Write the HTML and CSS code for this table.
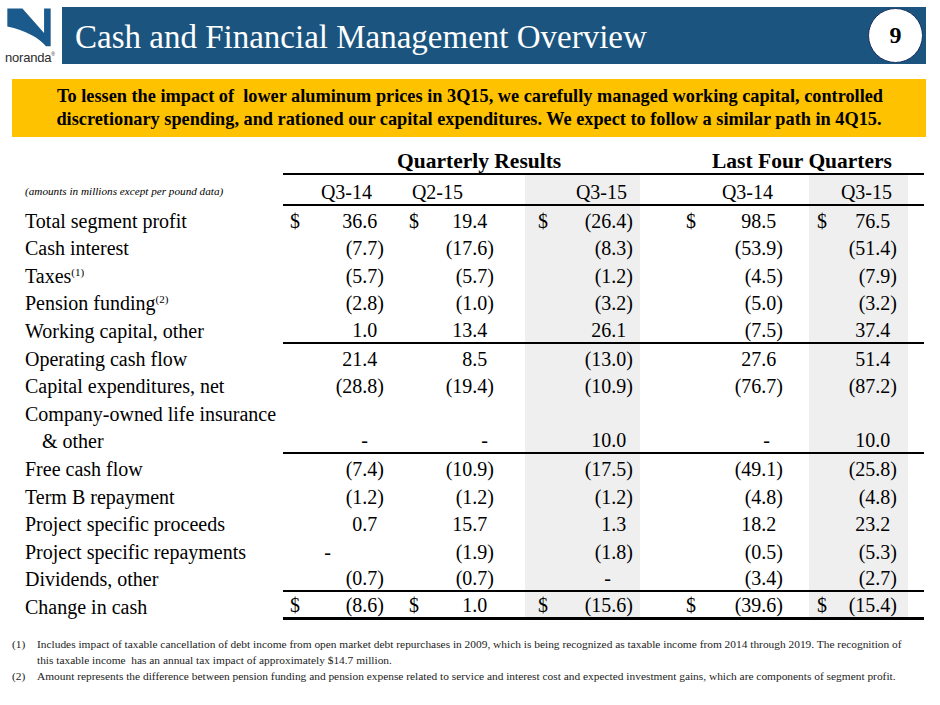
FILE: index.html
```html
<!DOCTYPE html>
<html>
<head>
<meta charset="utf-8">
<title>Cash and Financial Management Overview</title>
<link rel="stylesheet" href="styles.css">
</head>
<body>
<header class="top">
  <div class="logo">
    <svg width="58" height="52" viewBox="0 0 58 52" aria-hidden="true">
      <path d="M6 9 L22 9 L45 35 L45 9 L52 9 L52 49 L47 49 C40 40 25 32 6 28 Z" fill="#1b5a8c"/>
    </svg>
    <span class="brand">noranda<sup>®</sup></span>
  </div>
  <div class="titlebar">
    <h1>Cash and Financial Management Overview</h1>
    <div class="badge">9</div>
  </div>
</header>

<div class="banner">
  <p class="l1">To lessen the impact of&nbsp; lower aluminum prices in 3Q15, we carefully managed working capital, controlled</p>
  <p>discretionary spending, and rationed our capital expenditures. We expect to follow a similar path in 4Q15.</p>
</div>

<table class="cf">
  <colgroup>
    <col class="w-label"><col class="w-c1"><col class="w-c2"><col class="w-c3"><col class="w-c4"><col class="w-c5"><col class="w-pad">
  </colgroup>
  <thead>
    <tr class="grp">
      <th></th>
      <th colspan="3" class="g1">Quarterly Results</th>
      <th colspan="3" class="g2">Last Four Quarters</th>
    </tr>
    <tr class="per">
      <th class="note">(amounts in millions except per pound data)</th>
      <th class="q c1">Q3-14</th>
      <th class="q c2">Q2-15</th>
      <th class="q c3 sh">Q3-15</th>
      <th class="q c4">Q3-14</th>
      <th class="q c5 sh">Q3-15</th>
      <th class="pad"></th>
    </tr>
  </thead>
  <tbody>
    <tr>
      <td class="lbl">Total segment profit</td>
      <td class="v c1"><span class="d">$</span>36.6<span class="h">)</span></td>
      <td class="v c2"><span class="d">$</span>19.4<span class="h">)</span></td>
      <td class="v c3 sh"><span class="d">$</span>(26.4)</td>
      <td class="v c4"><span class="d">$</span>98.5<span class="h">)</span></td>
      <td class="v c5 sh"><span class="d">$</span>76.5<span class="h">)</span></td>
      <td class="pad"></td>
    </tr>
    <tr>
      <td class="lbl">Cash interest</td>
      <td class="v c1">(7.7)</td>
      <td class="v c2">(17.6)</td>
      <td class="v c3 sh">(8.3)</td>
      <td class="v c4">(53.9)</td>
      <td class="v c5 sh">(51.4)</td>
      <td class="pad"></td>
    </tr>
    <tr>
      <td class="lbl">Taxes<sup>(1)</sup></td>
      <td class="v c1">(5.7)</td>
      <td class="v c2">(5.7)</td>
      <td class="v c3 sh">(1.2)</td>
      <td class="v c4">(4.5)</td>
      <td class="v c5 sh">(7.9)</td>
      <td class="pad"></td>
    </tr>
    <tr>
      <td class="lbl">Pension funding<sup>(2)</sup></td>
      <td class="v c1">(2.8)</td>
      <td class="v c2">(1.0)</td>
      <td class="v c3 sh">(3.2)</td>
      <td class="v c4">(5.0)</td>
      <td class="v c5 sh">(3.2)</td>
      <td class="pad"></td>
    </tr>
    <tr class="rule">
      <td class="lbl">Working capital, other</td>
      <td class="v c1">1.0<span class="h">)</span></td>
      <td class="v c2">13.4<span class="h">)</span></td>
      <td class="v c3 sh">26.1<span class="h">)</span></td>
      <td class="v c4">(7.5)</td>
      <td class="v c5 sh">37.4<span class="h">)</span></td>
      <td class="pad"></td>
    </tr>
    <tr>
      <td class="lbl">Operating cash flow</td>
      <td class="v c1">21.4<span class="h">)</span></td>
      <td class="v c2">8.5<span class="h">)</span></td>
      <td class="v c3 sh">(13.0)</td>
      <td class="v c4">27.6<span class="h">)</span></td>
      <td class="v c5 sh">51.4<span class="h">)</span></td>
      <td class="pad"></td>
    </tr>
    <tr>
      <td class="lbl">Capital expenditures, net</td>
      <td class="v c1">(28.8)</td>
      <td class="v c2">(19.4)</td>
      <td class="v c3 sh">(10.9)</td>
      <td class="v c4">(76.7)</td>
      <td class="v c5 sh">(87.2)</td>
      <td class="pad"></td>
    </tr>
    <tr>
      <td class="lbl">Company-owned life insurance</td>
      <td class="v c1"></td>
      <td class="v c2"></td>
      <td class="v c3 sh"></td>
      <td class="v c4"></td>
      <td class="v c5 sh"></td>
      <td class="pad"></td>
    </tr>
    <tr class="rule">
      <td class="lbl indent">&amp; other</td>
      <td class="v c1 zero-a">-</td>
      <td class="v c2 zero-b">-</td>
      <td class="v c3 sh">10.0<span class="h">)</span></td>
      <td class="v c4 zero-c">-</td>
      <td class="v c5 sh">10.0<span class="h">)</span></td>
      <td class="pad"></td>
    </tr>
    <tr>
      <td class="lbl">Free cash flow</td>
      <td class="v c1">(7.4)</td>
      <td class="v c2">(10.9)</td>
      <td class="v c3 sh">(17.5)</td>
      <td class="v c4">(49.1)</td>
      <td class="v c5 sh">(25.8)</td>
      <td class="pad"></td>
    </tr>
    <tr>
      <td class="lbl">Term B repayment</td>
      <td class="v c1">(1.2)</td>
      <td class="v c2">(1.2)</td>
      <td class="v c3 sh">(1.2)</td>
      <td class="v c4">(4.8)</td>
      <td class="v c5 sh">(4.8)</td>
      <td class="pad"></td>
    </tr>
    <tr>
      <td class="lbl">Project specific proceeds</td>
      <td class="v c1">0.7<span class="h">)</span></td>
      <td class="v c2">15.7<span class="h">)</span></td>
      <td class="v c3 sh">1.3<span class="h">)</span></td>
      <td class="v c4">18.2<span class="h">)</span></td>
      <td class="v c5 sh">23.2<span class="h">)</span></td>
      <td class="pad"></td>
    </tr>
    <tr>
      <td class="lbl">Project specific repayments</td>
      <td class="v c1 zero-d">-</td>
      <td class="v c2">(1.9)</td>
      <td class="v c3 sh">(1.8)</td>
      <td class="v c4">(0.5)</td>
      <td class="v c5 sh">(5.3)</td>
      <td class="pad"></td>
    </tr>
    <tr class="rule">
      <td class="lbl">Dividends, other</td>
      <td class="v c1">(0.7)</td>
      <td class="v c2">(0.7)</td>
      <td class="v c3 sh zero-e">-</td>
      <td class="v c4">(3.4)</td>
      <td class="v c5 sh">(2.7)</td>
      <td class="pad"></td>
    </tr>
    <tr class="total">
      <td class="lbl">Change in cash</td>
      <td class="v c1"><span class="d">$</span>(8.6)</td>
      <td class="v c2"><span class="d">$</span>1.0<span class="h">)</span></td>
      <td class="v c3 sh"><span class="d">$</span>(15.6)</td>
      <td class="v c4"><span class="d">$</span>(39.6)</td>
      <td class="v c5 sh"><span class="d">$</span>(15.4)</td>
      <td class="pad"></td>
    </tr>
  </tbody>
</table>

<div class="notes">
  <div class="fn">
    <span class="num">(1)</span>
    <span>Includes impact of taxable cancellation of debt income from open market debt repurchases in 2009, which is being recognized as taxable income from 2014 through 2019. The recognition of<br>this taxable income&nbsp; has an annual tax impact of approximately $14.7 million.</span>
  </div>
  <div class="fn">
    <span class="num">(2)</span>
    <span>Amount represents the difference between pension funding and pension expense related to service and interest cost and expected investment gains, which are components of segment profit.</span>
  </div>
</div>
</body>
</html>
```

FILE: styles.css
```css
* { box-sizing: border-box; }
html, body { margin: 0; padding: 0; background: #fff; }
body {
  width: 940px;
  height: 705px;
  overflow: hidden;
  font-family: "Liberation Serif", "Times New Roman", serif;
  color: #000;
}

/* header */
.top { display: flex; height: 64px; }
.logo { width: 62px; flex: none; display: flex; flex-direction: column; }
.logo svg { display: block; }
.brand {
  font-family: "Liberation Sans", Arial, sans-serif;
  font-size: 13px;
  line-height: 13px;
  color: #2b2b2b;
  margin: 2px 0 0 5px;
  letter-spacing: -0.2px;
}
.brand sup { font-size: 5px; vertical-align: 6px; line-height: 0; }
.titlebar {
  position: relative;
  flex: 1;
  margin: 7px 14px 0 0;
  height: 57px;
  background: #1b557f;
  display: flex;
  align-items: center;
}
.titlebar h1 {
  margin: 4px 0 0 13px;
  font-weight: normal;
  font-size: 33px;
  line-height: 1;
  color: #fff;
}
.badge {
  position: absolute;
  right: 3px;
  top: 1px;
  width: 55px;
  height: 55px;
  border-radius: 50%;
  background: #fff;
  border: 1.5px solid #1a2f5e;
  display: flex;
  align-items: center;
  justify-content: center;
  font-weight: bold;
  font-size: 24px;
}

/* banner */
.banner {
  margin: 15px 14px 0 12px;
  height: 58px;
  background: #fec200;
  display: flex;
  flex-direction: column;
  justify-content: center;
  align-items: center;
  text-align: center;
  font-weight: bold;
  font-size: 18.3px;
  line-height: 23px;
}
.banner p { margin: 0; white-space: nowrap; }
.banner .l1 { margin-left: 2px; }

/* table */
.cf {
  margin: 12px 0 0 25px;
  border-collapse: collapse;
  table-layout: fixed;
  width: 899px;
  font-size: 20px;
}
.w-label { width: 258px; }
.w-c1 { width: 115px; }
.w-c2 { width: 127px; }
.w-c3 { width: 115px; }
.w-c4 { width: 169px; }
.w-c5 { width: 99px; }
.w-pad { width: 16px; }

.cf th, .cf td {
  padding: 0;
  white-space: nowrap;
  line-height: 20px;
  font-weight: normal;
}
.cf td { height: 27.6px; vertical-align: bottom; padding-bottom: 2px; }

.grp th { height: 25px; font-size: 21.5px; font-weight: bold; text-align: left; vertical-align: middle; }
.grp .g1, .grp .g2 { border-bottom: 2px solid #000; }
.cf .g1 { padding-left: 114px; }
.cf .g2 { padding-left: 72px; }

.per th { height: 31px; vertical-align: bottom; padding-bottom: 2px; }
.per th.q, .per th.pad { border-bottom: 2px solid #000; }
.cf .note { text-align: left; font-style: italic; font-size: 11.2px; padding-bottom: 4px; }
.q { text-align: right; }
.cf .q.c1 { padding-right: 26px; }
.cf .q.c2 { padding-right: 62px; }
.cf .q.c3 { padding-right: 13px; }
.cf .q.c4 { padding-right: 36px; }
.cf .q.c5 { padding-right: 16px; }

.lbl { text-align: left; }
.lbl sup { font-size: 11px; vertical-align: 7px; line-height: 0; }
.cf .indent { padding-left: 17px; }

.v { text-align: right; }
.v .d { float: left; }
.h { visibility: hidden; }
.cf .v.c1 { padding-right: 14px; padding-left: 7px; }
.cf .v.c2 { padding-right: 31px; padding-left: 11px; }
.cf .v.c3 { padding-right: 7px; padding-left: 13px; }
.cf .v.c4 { padding-right: 26px; padding-left: 46px; }
.cf .v.c5 { padding-right: 11px; padding-left: 8px; }

/* zero dashes sit at their own spots */
.cf .v.zero-a { padding-right: 30px; }
.cf .v.zero-b { padding-right: 37px; }
.cf .v.zero-c { padding-right: 39px; }
.cf .v.zero-d { padding-right: 67px; }
.cf .v.zero-e { padding-right: 29px; }

.sh { background: #efefef; }

.rule td.v, .rule td.pad { border-bottom: 2px solid #000; }
.total td.v, .total td.pad { border-bottom: 3px solid #000; }

/* footnotes */
.notes {
  margin: 16px 0 0 12px;
  font-size: 11.4px;
  line-height: 16px;
  color: #222;
}
.fn { display: grid; grid-template-columns: 25px auto; }
.fn span { white-space: nowrap; }
```
